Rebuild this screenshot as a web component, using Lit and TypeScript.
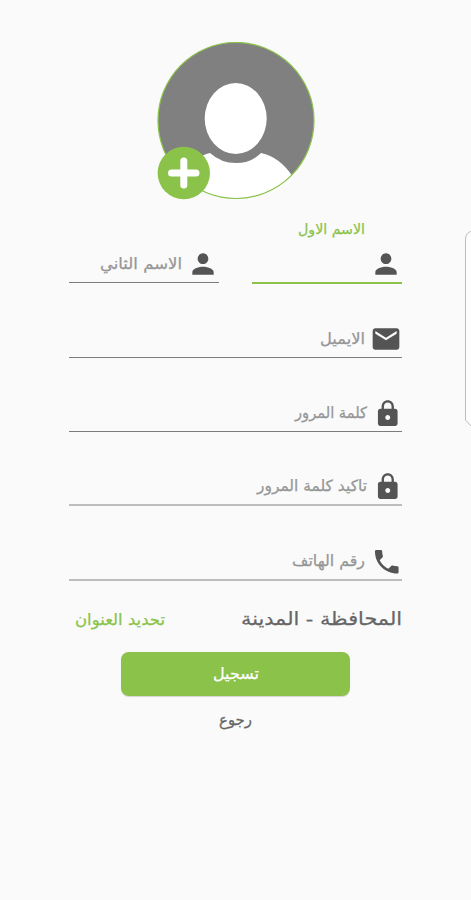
import { LitElement, html, svg, css } from "lit";
import { customElement, property } from "lit/decorators.js";

const icons: Record<string, ReturnType<typeof svg>> = {
  person: svg`<path d="M12 12c2.21 0 4-1.79 4-4s-1.79-4-4-4-4 1.79-4 4 1.79 4 4 4zm0 2c-2.67 0-8 1.34-8 4v2h16v-2c0-2.66-5.33-4-8-4z"/>`,
  mail: svg`<path d="M20 4H4c-1.1 0-1.99.9-1.99 2L2 18c0 1.1.9 2 2 2h16c1.1 0 2-.9 2-2V6c0-1.1-.9-2-2-2zm0 4l-8 5-8-5V6l8 5 8-5v2z"/>`,
  lock: svg`<path d="M18 8h-1V6c0-2.76-2.24-5-5-5S7 3.24 7 6v2H6c-1.1 0-2 .9-2 2v10c0 1.1.9 2 2 2h12c1.1 0 2-.9 2-2V10c0-1.1-.9-2-2-2zm-6 9c-1.1 0-2-.9-2-2s.9-2 2-2 2 .9 2 2-.9 2-2 2zm3.1-9H8.9V6c0-1.71 1.39-3.1 3.1-3.1 1.71 0 3.1 1.39 3.1 3.1v2z"/>`,
  phone: svg`<path d="M6.62 10.79c1.44 2.83 3.76 5.14 6.59 6.59l2.2-2.2c.27-.27.67-.36 1.02-.24 1.12.37 2.33.57 3.57.57.55 0 1 .45 1 1V20c0 .55-.45 1-1 1-9.39 0-17-7.61-17-17 0-.55.45-1 1-1h3.5c.55 0 1 .45 1 1 0 1.25.2 2.45.57 3.57.11.35.03.74-.25 1.02l-2.2 2.2z"/>`,
};

/** A line of text fitted to a given width. */
@customElement("fit-text")
class FitText extends LitElement {
  @property() text = "";
  @property({ type: Number }) width = 0;
  @property({ type: Number }) size = 15;
  static styles = css`
    :host { display: block; flex: none; line-height: 0; }
    svg { display: block; overflow: visible; }
    text {
      font-family: "DejaVu Sans", sans-serif; fill: currentColor; stroke: currentColor;
      stroke-width: 0.25px; direction: rtl; text-anchor: middle;
    }
  `;
  render() {
    return html`<svg width=${this.width} height="24">
      <text x=${this.width / 2} y="17" font-size=${this.size} textLength=${this.width}
        lengthAdjust="spacingAndGlyphs">${this.text}</text>
    </svg>`;
  }
}

@customElement("form-field")
class FormField extends LitElement {
  @property() icon = "person";
  @property() label = "";
  @property({ type: Number }) width = 0;
  @property({ type: Boolean, reflect: true }) focused = false;
  @property({ type: Boolean, reflect: true }) light = false;
  static styles = css`
    :host {
      display: flex; flex-direction: column; justify-content: flex-end;
      flex: 1; box-sizing: border-box; height: 100%; color: #969696;
    }
    .floating { color: #8bc34a; margin: 0 37px 5px 0; }
    .row { display: flex; align-items: center; height: 36px; gap: 5.5px; }
    .icon { display: block; flex: none; width: 32px; height: 32px; fill: #545454; }
    .person { margin-top: -1px; }
    .lock { width: 29.5px; height: 29.5px; margin-top: 2px; }
    .phone { width: 31.5px; height: 31.5px; margin-top: 1px; }
    .line { height: 1px; background: #7c7c7c; margin-bottom: 1px; }
    :host([light]) .line { height: 2px; background: #bdbdbd; margin: 0; }
    :host([focused]) .line { height: 2px; background: #8bc34a; margin: 0; }
  `;
  render() {
    const text = html`<fit-text .text=${this.label} .width=${this.width} .size=${this.focused ? 14 : 15.5}></fit-text>`;
    return html`
      ${this.focused ? html`<div class="floating">${text}</div>` : ""}
      <div class="row">
        <svg class="icon ${this.icon}" viewBox="0 0 24 24">${icons[this.icon]}</svg>
        ${this.focused ? "" : text}
      </div>
      <div class="line"></div>
    `;
  }
}

@customElement("app-root")
class AppRoot extends LitElement {
  static styles = css`
    :host {
      display: block; position: relative; box-sizing: border-box; width: 100%; height: 900px;
      padding: 42px 69px 0 69px; background: #fafafa; overflow: hidden; direction: rtl;
    }
    .avatar { display: block; width: 158px; height: 158px; margin: 0 auto; }
    .fields { display: grid; grid-template-rows: 84px 75px 74px 73px 75px; }
    .names { display: flex; gap: 33px; }
    .address { display: flex; justify-content: space-between; align-items: center; height: 48px; margin-top: 15px; color: #666; }
    .pick { color: #8bc34a; margin-left: 6px; }
    .submit {
      display: flex; align-items: center; justify-content: center; width: 229px; height: 44px;
      margin: 8px auto 0; border: 0; padding: 0; border-radius: 8px; background: #8bc34a; color: #fff;
      box-shadow: 0 0.5px 1px rgba(0, 0, 0, 0.15);
    }
    .back { display: flex; justify-content: center; margin-top: 12px; color: #666; }
    .drawer { position: absolute; left: 464px; top: 230px; width: 7px; height: 198px; }
  `;
  render() {
    return html`
      <svg class="avatar" viewBox="0 0 158 158">
        <defs><clipPath id="disc"><circle cx="79" cy="78.5" r="78"/></clipPath></defs>
        <g clip-path="url(#disc)">
          <rect width="158" height="158" fill="#808080"/>
          <path d="M20 158C22 126 38 115 53 111Q64 121 79 121Q94 121 104 111Q123 115 136 135V158Z" fill="#fff"/>
          <ellipse cx="78.7" cy="76.5" rx="31" ry="35.5" fill="#fff"/>
        </g>
        <circle cx="79" cy="78.5" r="78" fill="none" stroke="#8bc34a" stroke-width="1.2"/>
        <circle cx="26.8" cy="131" r="26.2" fill="#8bc34a"/>
        <path d="M26.8 119V143M14.5 131H39" stroke="#fff" stroke-width="7" stroke-linecap="round"/>
      </svg>
      <div class="fields">
        <div class="names">
          <form-field label="الاسم الاول" width="67" focused></form-field>
          <form-field label="الاسم الثاني" width="82"></form-field>
        </div>
        <form-field icon="mail" label="الايميل" width="45"></form-field>
        <form-field icon="lock" label="كلمة المرور" width="72"></form-field>
        <form-field icon="lock" label="تاكيد كلمة المرور" width="110" light></form-field>
        <form-field icon="phone" label="رقم الهاتف" width="73" light></form-field>
      </div>
      <div class="address">
        <fit-text text="المحافظة - المدينة" width="161" size="18.5"></fit-text>
        <fit-text class="pick" text="تحديد العنوان" width="90" size="16"></fit-text>
      </div>
      <button class="submit"><fit-text text="تسجيل" width="46" size="15.5"></fit-text></button>
      <div class="back"><fit-text text="رجوع" width="33" size="15.5"></fit-text></div>
      <svg class="drawer" viewBox="0 0 7 198">
        <path d="M8 1Q1.5 3 1.5 9V190L8 197" fill="#fdfdfd" stroke="#bdbdbd"/>
      </svg>
    `;
  }
}
